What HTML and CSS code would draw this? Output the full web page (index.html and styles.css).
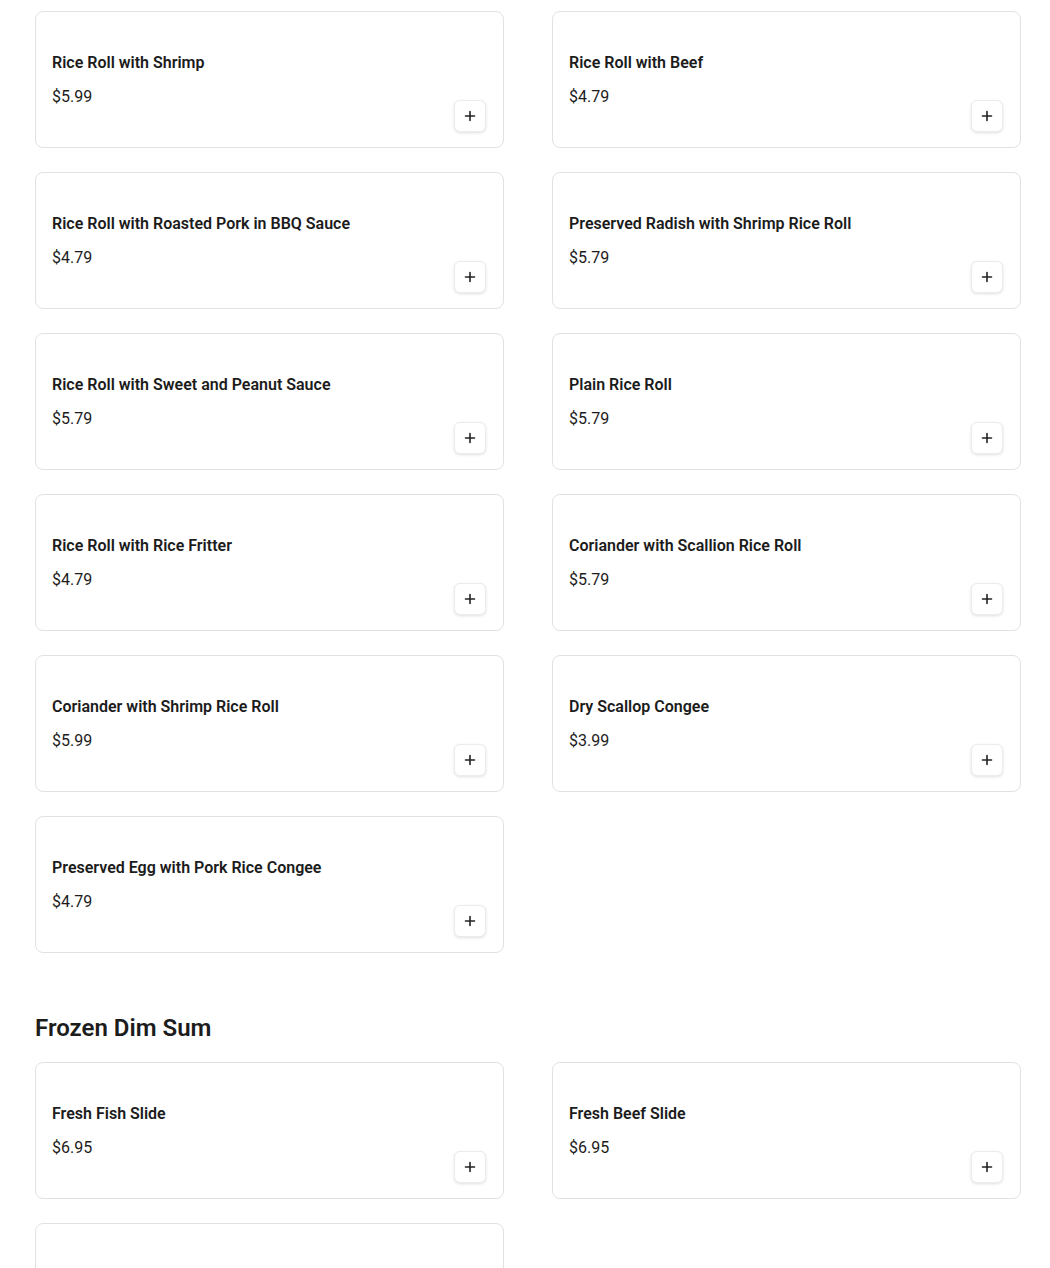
FILE: index.html
```html
<!DOCTYPE html>
<html lang="en">
<head>
<meta charset="utf-8">
<title>Menu</title>
<link rel="stylesheet" href="styles.css">
</head>
<body>
<main class="menu">
  <section class="section first">
    <div class="grid">
      <div class="card"><div class="info"><h3 class="name">Rice Roll with Shrimp</h3><p class="price">$5.99</p></div><button class="add" aria-label="Add"><svg viewBox="0 0 12 12" width="12" height="12"><path d="M6 1.5v9M1.5 6h9" stroke="#222" stroke-width="1.6" stroke-linecap="round"/></svg></button></div>
      <div class="card"><div class="info"><h3 class="name">Rice Roll with Beef</h3><p class="price">$4.79</p></div><button class="add" aria-label="Add"><svg viewBox="0 0 12 12" width="12" height="12"><path d="M6 1.5v9M1.5 6h9" stroke="#222" stroke-width="1.6" stroke-linecap="round"/></svg></button></div>
      <div class="card"><div class="info"><h3 class="name">Rice Roll with Roasted Pork in BBQ Sauce</h3><p class="price">$4.79</p></div><button class="add" aria-label="Add"><svg viewBox="0 0 12 12" width="12" height="12"><path d="M6 1.5v9M1.5 6h9" stroke="#222" stroke-width="1.6" stroke-linecap="round"/></svg></button></div>
      <div class="card"><div class="info"><h3 class="name">Preserved Radish with Shrimp Rice Roll</h3><p class="price">$5.79</p></div><button class="add" aria-label="Add"><svg viewBox="0 0 12 12" width="12" height="12"><path d="M6 1.5v9M1.5 6h9" stroke="#222" stroke-width="1.6" stroke-linecap="round"/></svg></button></div>
      <div class="card"><div class="info"><h3 class="name">Rice Roll with Sweet and Peanut Sauce</h3><p class="price">$5.79</p></div><button class="add" aria-label="Add"><svg viewBox="0 0 12 12" width="12" height="12"><path d="M6 1.5v9M1.5 6h9" stroke="#222" stroke-width="1.6" stroke-linecap="round"/></svg></button></div>
      <div class="card"><div class="info"><h3 class="name">Plain Rice Roll</h3><p class="price">$5.79</p></div><button class="add" aria-label="Add"><svg viewBox="0 0 12 12" width="12" height="12"><path d="M6 1.5v9M1.5 6h9" stroke="#222" stroke-width="1.6" stroke-linecap="round"/></svg></button></div>
      <div class="card"><div class="info"><h3 class="name">Rice Roll with Rice Fritter</h3><p class="price">$4.79</p></div><button class="add" aria-label="Add"><svg viewBox="0 0 12 12" width="12" height="12"><path d="M6 1.5v9M1.5 6h9" stroke="#222" stroke-width="1.6" stroke-linecap="round"/></svg></button></div>
      <div class="card"><div class="info"><h3 class="name">Coriander with Scallion Rice Roll</h3><p class="price">$5.79</p></div><button class="add" aria-label="Add"><svg viewBox="0 0 12 12" width="12" height="12"><path d="M6 1.5v9M1.5 6h9" stroke="#222" stroke-width="1.6" stroke-linecap="round"/></svg></button></div>
      <div class="card"><div class="info"><h3 class="name">Coriander with Shrimp Rice Roll</h3><p class="price">$5.99</p></div><button class="add" aria-label="Add"><svg viewBox="0 0 12 12" width="12" height="12"><path d="M6 1.5v9M1.5 6h9" stroke="#222" stroke-width="1.6" stroke-linecap="round"/></svg></button></div>
      <div class="card"><div class="info"><h3 class="name">Dry Scallop Congee</h3><p class="price">$3.99</p></div><button class="add" aria-label="Add"><svg viewBox="0 0 12 12" width="12" height="12"><path d="M6 1.5v9M1.5 6h9" stroke="#222" stroke-width="1.6" stroke-linecap="round"/></svg></button></div>
      <div class="card"><div class="info"><h3 class="name">Preserved Egg with Pork Rice Congee</h3><p class="price">$4.79</p></div><button class="add" aria-label="Add"><svg viewBox="0 0 12 12" width="12" height="12"><path d="M6 1.5v9M1.5 6h9" stroke="#222" stroke-width="1.6" stroke-linecap="round"/></svg></button></div>
    </div>
  </section>
  <section class="section">
    <h2 class="section-title">Frozen Dim Sum</h2>
    <div class="grid">
      <div class="card"><div class="info"><h3 class="name">Fresh Fish Slide</h3><p class="price">$6.95</p></div><button class="add" aria-label="Add"><svg viewBox="0 0 12 12" width="12" height="12"><path d="M6 1.5v9M1.5 6h9" stroke="#222" stroke-width="1.6" stroke-linecap="round"/></svg></button></div>
      <div class="card"><div class="info"><h3 class="name">Fresh Beef Slide</h3><p class="price">$6.95</p></div><button class="add" aria-label="Add"><svg viewBox="0 0 12 12" width="12" height="12"><path d="M6 1.5v9M1.5 6h9" stroke="#222" stroke-width="1.6" stroke-linecap="round"/></svg></button></div>
      <div class="card"><div class="info"><h3 class="name">Fresh Shrimp Slide</h3><p class="price">$6.95</p></div><button class="add" aria-label="Add"><svg viewBox="0 0 12 12" width="12" height="12"><path d="M6 1.5v9M1.5 6h9" stroke="#222" stroke-width="1.6" stroke-linecap="round"/></svg></button></div>
    </div>
  </section>
</main>
</body>
</html>
```

FILE: styles.css
```css
* { box-sizing: border-box; }

html, body {
  margin: 0;
  padding: 0;
  background: #ffffff;
  font-family: Roboto, "Liberation Sans", Arial, sans-serif;
  color: #1c1c1c;
}

.menu {
  padding: 11px 29px 40px 35px;
}

.section + .section {
  margin-top: 59px;
}

.section-title {
  margin: 0 0 18px;
  font-size: 24px;
  line-height: 32px;
  font-weight: 600;
  color: #1c1c1c;
}

.grid {
  display: grid;
  grid-template-columns: 469px 469px;
  column-gap: 48px;
  row-gap: 24px;
}

.card {
  height: 137px;
  border: 1px solid #e2e2e2;
  border-radius: 8px;
  padding: 39px 17px 15px 16px;
  display: flex;
  justify-content: space-between;
  align-items: flex-end;
  background: #fff;
}

.info {
  align-self: flex-start;
}

.name {
  margin: 0;
  font-size: 16px;
  line-height: 24px;
  font-weight: 600;
  color: #1c1c1c;
}

.price {
  margin: 10px 0 0;
  font-size: 16px;
  line-height: 24px;
  font-weight: 400;
  color: #1c1c1c;
}

.add {
  width: 32px;
  height: 32px;
  padding: 0;
  border: 1px solid #ececec;
  border-radius: 6px;
  background: #fff;
  box-shadow: 0 1px 3px rgba(0, 0, 0, 0.12);
  display: flex;
  align-items: center;
  justify-content: center;
  cursor: pointer;
}

.add svg {
  display: block;
}
```
